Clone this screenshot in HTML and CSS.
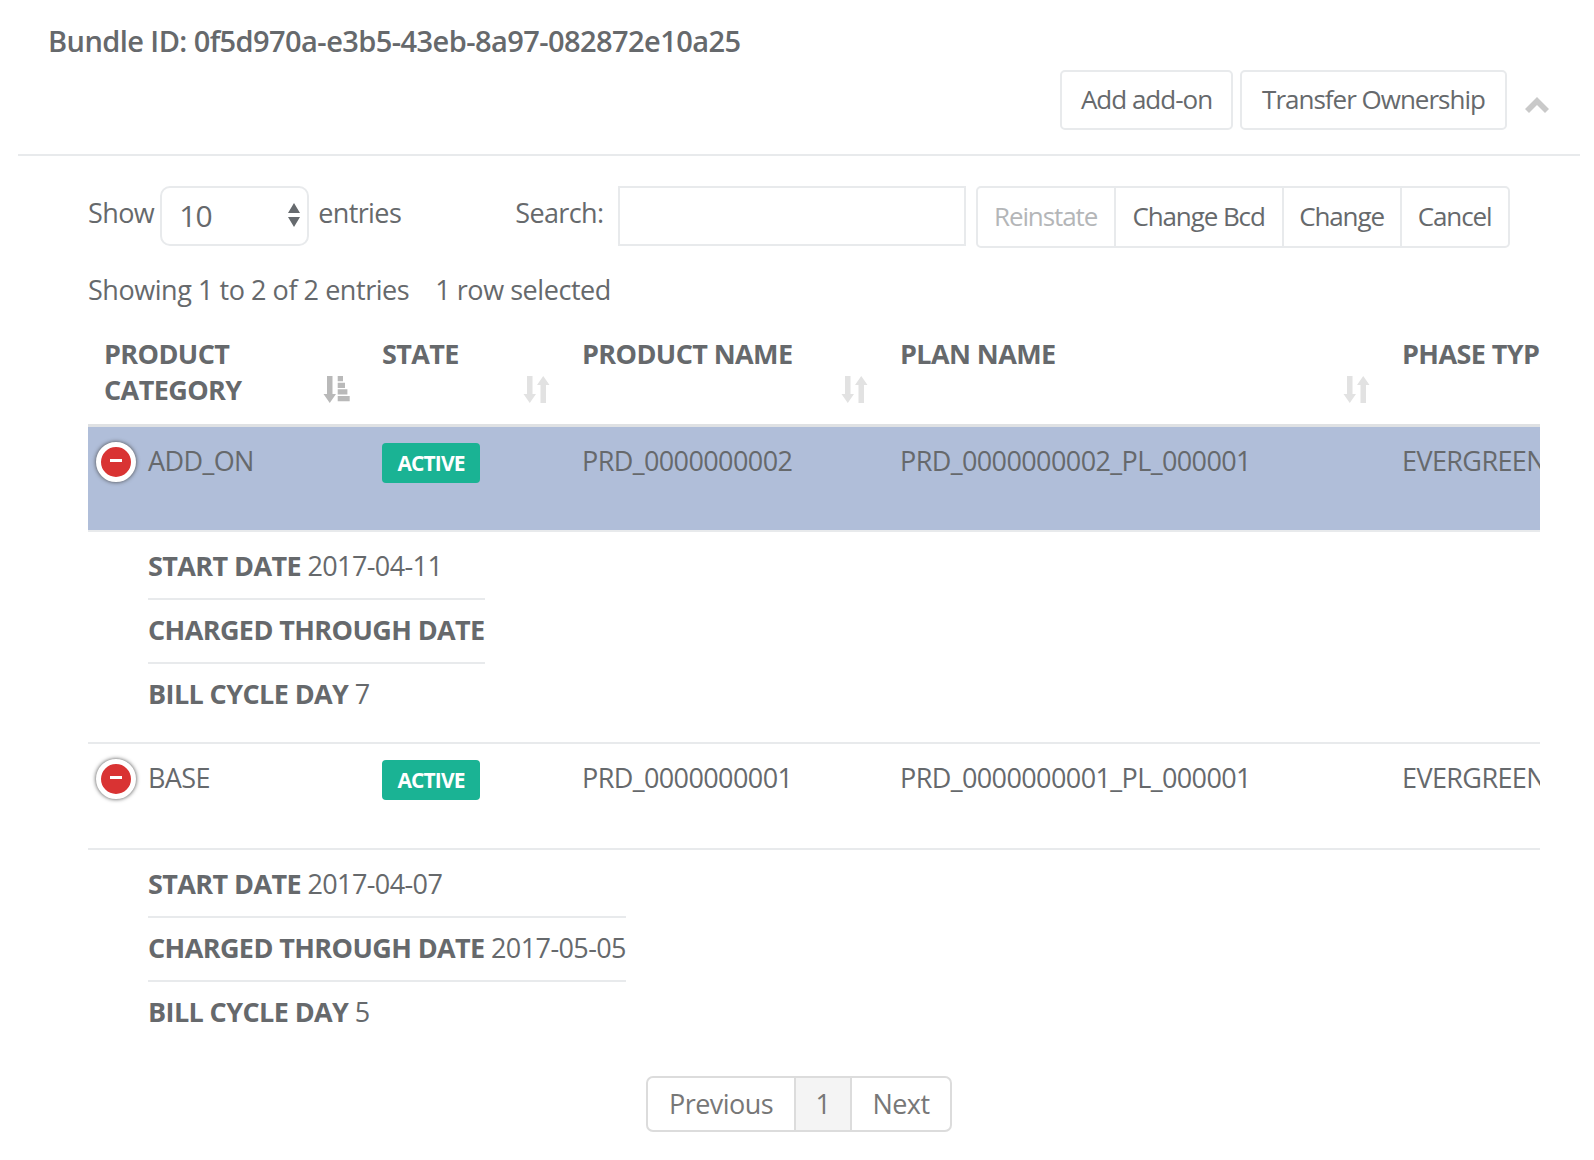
FILE: index.html
```html
<!DOCTYPE html>
<html lang="en">
<head>
    <meta charset="UTF-8">
    <meta name="viewport" content="width=device-width, initial-scale=1.0">
    <title>Bundle</title>
    <link rel="stylesheet" href="styles.css">
</head>
<body>
    <div class="panel">
        <div class="panel-head">
            <h2>Bundle ID: 0f5d970a-e3b5-43eb-8a97-082872e10a25</h2>
            <div class="head-actions">
                <button class="btn btn-addon">Add add-on</button>
                <button class="btn btn-transfer">Transfer Ownership</button>
                <svg class="chevron" width="24" height="16" viewBox="0 0 24 16"><path d="M0 12 L12 0 L24 12 L20 16 L12 8 L4 16 Z" fill="#c9c9c9"/></svg>
            </div>
        </div>

        <div class="panel-body">
            <div class="toolbar">
                <label class="show">Show</label>
                <div class="select"><span>10</span>
                    <svg width="14" height="28" viewBox="0 0 14 28"><path d="M7 2 L13 12 H1 Z M1 16 H13 L7 26 Z" fill="#666a6e"/></svg>
                </div>
                <label class="entries">entries</label>
                <label class="search-label">Search:</label>
                <div class="search"></div>
                <div class="btn-group">
                    <span class="group-btn disabled w-reinstate">Reinstate</span>
                    <span class="group-btn w-bcd">Change Bcd</span>
                    <span class="group-btn w-change">Change</span>
                    <span class="group-btn w-cancel">Cancel</span>
                </div>
            </div>

            <p class="info">Showing 1 to 2 of 2 entries<span class="selected">1 row selected</span></p>

            <div class="table-wrap">
                <table>
                    <colgroup>
                        <col class="c-cat"><col class="c-state"><col class="c-prod"><col class="c-plan"><col class="c-phase">
                    </colgroup>
                    <thead>
                        <tr>
                            <th>PRODUCT<br>CATEGORY
                                <svg class="sort" width="27" height="27" viewBox="0 0 27 27"><path d="M4 0 H9.5 V18 H13 L6.75 27 L0.5 18 H4 Z M14.7 0 H20 V5.3 H14.7 Z M14.7 6.7 H22 V12 H14.7 Z M14.7 13.3 H24.4 V18.6 H14.7 Z M14.7 20 H26.7 V25.3 H14.7 Z" fill="#b9b9b9"/></svg>
                            </th>
                            <th>STATE
                                <svg class="sort" width="27" height="27" viewBox="0 0 27 27"><path d="M4 0 H9.5 V18 H13 L6.75 27 L0.5 18 H4 Z M17.5 27 H23 V9 H26.5 L20.25 0 L14 9 H17.5 Z" fill="#e2e2e2"/></svg>
                            </th>
                            <th>PRODUCT NAME
                                <svg class="sort" width="27" height="27" viewBox="0 0 27 27"><path d="M4 0 H9.5 V18 H13 L6.75 27 L0.5 18 H4 Z M17.5 27 H23 V9 H26.5 L20.25 0 L14 9 H17.5 Z" fill="#e2e2e2"/></svg>
                            </th>
                            <th>PLAN NAME
                                <svg class="sort" width="27" height="27" viewBox="0 0 27 27"><path d="M4 0 H9.5 V18 H13 L6.75 27 L0.5 18 H4 Z M17.5 27 H23 V9 H26.5 L20.25 0 L14 9 H17.5 Z" fill="#e2e2e2"/></svg>
                            </th>
                            <th>PHASE TYPE</th>
                        </tr>
                    </thead>
                    <tbody>
                        <tr class="row is-selected">
                            <td class="first"><span class="toggle"></span>ADD_ON</td>
                            <td><span class="badge">ACTIVE</span></td>
                            <td>PRD_0000000002</td>
                            <td>PRD_0000000002_PL_000001</td>
                            <td>EVERGREEN</td>
                        </tr>
                        <tr class="child">
                            <td colspan="5">
                                <ul class="details">
                                    <li><b>START DATE</b> 2017-04-11</li>
                                    <li><b>CHARGED THROUGH DATE</b></li>
                                    <li><b>BILL CYCLE DAY</b> 7</li>
                                </ul>
                            </td>
                        </tr>
                        <tr class="row">
                            <td class="first"><span class="toggle"></span>BASE</td>
                            <td><span class="badge">ACTIVE</span></td>
                            <td>PRD_0000000001</td>
                            <td>PRD_0000000001_PL_000001</td>
                            <td>EVERGREEN</td>
                        </tr>
                        <tr class="child last">
                            <td colspan="5">
                                <ul class="details">
                                    <li><b>START DATE</b> 2017-04-07</li>
                                    <li><b>CHARGED THROUGH DATE</b> 2017-05-05</li>
                                    <li><b>BILL CYCLE DAY</b> 5</li>
                                </ul>
                            </td>
                        </tr>
                    </tbody>
                </table>
            </div>

            <div class="pagination">
                <span class="page prev">Previous</span>
                <span class="page current">1</span>
                <span class="page next">Next</span>
            </div>
        </div>
    </div>
</body>
</html>
```

FILE: styles.css
```css
* {
    box-sizing: border-box;
}

body {
    margin: 0;
    font-family: "Open Sans", sans-serif;
    font-size: 27px;
    letter-spacing: -0.6px;
    color: #66696c;
    background: #fff;
}

.panel {
    width: 1594px;
    height: 1160px;
    overflow: hidden;
}

.panel-head {
    margin: 0 14px 0 18px;
    height: 156px;
    padding: 21px 0 0 30px;
    border-bottom: 2px solid #e8eaec;
}

h2 {
    margin: 0;
    font-size: 29px;
    line-height: 40px;
    font-weight: 600;
    letter-spacing: -0.57px;
}

.head-actions {
    display: flex;
    justify-content: flex-end;
    align-items: center;
    gap: 7px;
    margin-top: 9px;
    padding-right: 31px;
}

.btn {
    height: 60px;
    padding: 0 0 2px;
    background: #fff;
    border: 2px solid #e8eaec;
    border-radius: 5px;
    font: inherit;
    font-size: 26px;
    letter-spacing: -1px;
    color: #66696c;
}

.btn-addon {
    width: 173px;
}

.btn-transfer {
    width: 267px;
}

.chevron {
    margin: 9px 0 0 11px;
}

.panel-body {
    padding: 30px 0 0 88px;
}

.toolbar {
    display: flex;
    align-items: flex-start;
    height: 62px;
}

.toolbar label {
    line-height: 54px;
}

.select {
    display: flex;
    justify-content: space-between;
    align-items: center;
    width: 149px;
    height: 60px;
    margin: 0 9px 0 6px;
    padding: 0 6px 2px 17px;
    border: 2px solid #e8eaec;
    border-radius: 10px;
    font-size: 30px;
    letter-spacing: -0.9px;
}

.search-label {
    margin-left: 114px;
}

.search {
    width: 348px;
    height: 60px;
    margin: 0 10px 0 14px;
    border: 2px solid #e8eaec;
}

.btn-group {
    display: flex;
    height: 62px;
    border: 2px solid #e8eaec;
    border-radius: 5px;
    font-size: 26px;
    letter-spacing: -1.1px;
}

.group-btn {
    line-height: 57px;
    text-align: center;
    border-left: 2px solid #e8eaec;
}

.group-btn:first-child {
    border-left: 0;
}

.group-btn.disabled {
    color: #b4b6b8;
}

.w-reinstate { width: 136px; }
.w-bcd { width: 168px; }
.w-change { width: 118px; }
.w-cancel { width: 108px; }

.info {
    margin: 0;
    padding-top: 22px;
    line-height: 40px;
    letter-spacing: -0.45px;
}

.selected {
    margin-left: 26px;
}

.table-wrap {
    width: 1452px;
    overflow: hidden;
    margin-top: 26px;
}

table {
    width: 1552px;
    table-layout: fixed;
    border-collapse: collapse;
}

.c-cat { width: 277px; }
.c-state { width: 200px; }
.c-prod { width: 318px; }
.c-plan { width: 502px; }

th {
    position: relative;
    height: 89px;
    padding: 0 0 0 17px;
    vertical-align: top;
    text-align: left;
    font-weight: 700;
    line-height: 36px;
    white-space: nowrap;
    border-bottom: 3px solid #dfe1e3;
}

th:first-child {
    padding-left: 16px;
}

.sort {
    position: absolute;
    right: 15px;
    bottom: 21px;
}

td {
    padding: 0 0 0 17px;
    vertical-align: top;
    white-space: nowrap;
}

.row td {
    height: 106px;
    padding-top: 14px;
    line-height: 40px;
    border-bottom: 2px solid #e8eaec;
}

.row .first {
    padding-left: 60px;
    position: relative;
}

.is-selected td {
    background: #b0bed9;
}

.toggle {
    position: absolute;
    left: 8px;
    top: 15px;
    width: 40px;
    height: 40px;
    border: 5px solid #fff;
    border-radius: 50%;
    background: #d93333;
    box-shadow: 0 0 4px #444;
}

.toggle::before {
    content: "";
    position: absolute;
    left: 9px;
    top: 12px;
    width: 12px;
    height: 3px;
    background: #fff;
}

.badge {
    display: block;
    width: 98px;
    height: 40px;
    margin-top: 2px;
    border-radius: 4px;
    background: #1ab394;
    color: #fff;
    font-size: 21px;
    font-weight: 700;
    line-height: 41px;
    text-align: center;
    letter-spacing: -0.9px;
}

.child td {
    height: 212px;
    padding: 4px 0 0 60px;
    border-bottom: 2px solid #e8eaec;
}

.child.last td {
    height: 204px;
    border-bottom: 0;
}

.details {
    display: inline-block;
    margin: 0;
    padding: 0;
    list-style: none;
}

.details li {
    height: 64px;
    line-height: 60px;
    border-bottom: 2px solid #e8eaec;
}

.details li:last-child {
    border-bottom: 0;
}

.pagination {
    display: flex;
    width: 306px;
    height: 56px;
    margin: 23px 0 0 558px;
    border: 2px solid #dcdcdc;
    border-radius: 7px;
    line-height: 52px;
    color: #777;
    letter-spacing: -0.55px;
    overflow: hidden;
}

.page {
    text-align: center;
}

.prev { width: 146px; }

.current {
    width: 58px;
    background: #f4f4f4;
    border-left: 2px solid #dcdcdc;
    border-right: 2px solid #dcdcdc;
}

.next { width: 98px; }
```
